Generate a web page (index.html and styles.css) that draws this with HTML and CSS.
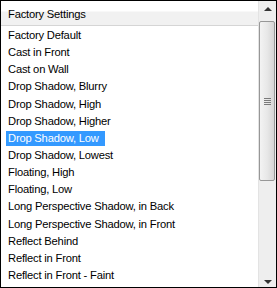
FILE: index.html
```html
<!DOCTYPE html>
<html lang="en">
<head>
    <meta charset="UTF-8">
    <title>Factory Settings</title>
    <link rel="stylesheet" href="styles.css">
</head>
<body>
<div id="panel">
    <div id="main">
        <div class="head">Factory Settings</div>
        <ul class="list">
            <li><span>Factory Default</span></li>
            <li><span>Cast in Front</span></li>
            <li><span>Cast on Wall</span></li>
            <li><span>Drop Shadow, Blurry</span></li>
            <li><span>Drop Shadow, High</span></li>
            <li><span>Drop Shadow, Higher</span></li>
            <li class="on"><span>Drop Shadow, Low</span></li>
            <li><span>Drop Shadow, Lowest</span></li>
            <li><span>Floating, High</span></li>
            <li><span>Floating, Low</span></li>
            <li><span>Long Perspective Shadow, in Back</span></li>
            <li><span>Long Perspective Shadow, in Front</span></li>
            <li><span>Reflect Behind</span></li>
            <li><span>Reflect in Front</span></li>
            <li><span>Reflect in Front - Faint</span></li>
        </ul>
    </div>
    <div class="scroll">
        <div class="arrow up"></div>
        <div class="thumb">
            <div class="grip"><i></i><i></i><i></i><i></i></div>
        </div>
        <div class="track"></div>
        <div class="arrow down"></div>
    </div>
</div>
</body>
</html>
```

FILE: styles.css
```css
body, ul {
    margin: 0;
    padding: 0;
}

#panel {
    width: 275px;
    height: 286px;
    border: 1px solid #000;
    display: flex;
    background: #fff;
    overflow: hidden;
    font-family: "Liberation Sans", Arial, sans-serif;
    font-size: 11.2px;
    letter-spacing: -0.2px;
    color: #000;
}

#main {
    flex: 1;
    overflow: hidden;
}

.head {
    height: 24px;
    line-height: 27px;
    padding-left: 7px;
    background: linear-gradient(#fff 0, #fff 10px, #f1f1f1 11px, #f1f1f1 100%);
    border-bottom: 1px solid #d5d5d5;
}

.list {
    list-style: none;
    padding: 1px 0 0 5px;
}

.list li {
    height: 17.15px;
    display: flex;
    align-items: center;
    white-space: nowrap;
}

.list li span {
    height: 15px;
    line-height: 15px;
    padding: 0 2px;
}

.list li.on span {
    padding-right: 6px;
    background: #3399ff;
    color: #fff;
}

.scroll {
    width: 17px;
    display: flex;
    flex-direction: column;
    background: #eeeeee;
    border-left: 1px solid #e3e3e3;
}

.arrow {
    height: 20px;
    display: flex;
    align-items: center;
    justify-content: center;
}

.arrow.up::before {
    content: "";
    border: 4px solid transparent;
    border-bottom: 4px solid #333;
    border-top: 0;
    margin-top: -4px;
}

.arrow.down::before {
    content: "";
    border: 4px solid transparent;
    border-top: 4px solid #333;
    border-bottom: 0;
    margin-top: 10px;
}

.thumb {
    height: 158px;
    margin: 0 1px 0 0;
    border: 1px solid #979797;
    border-radius: 2px;
    background: linear-gradient(90deg, #f3f3f3 0, #e8e8e8 50%, #d6d6d6 100%);
    display: flex;
    align-items: center;
    justify-content: center;
}

.grip {
    display: flex;
    flex-direction: column;
    gap: 1px;
}

.grip i {
    width: 7px;
    height: 1px;
    background: #7a7a7a;
}

.track {
    flex: 1;
}
```
